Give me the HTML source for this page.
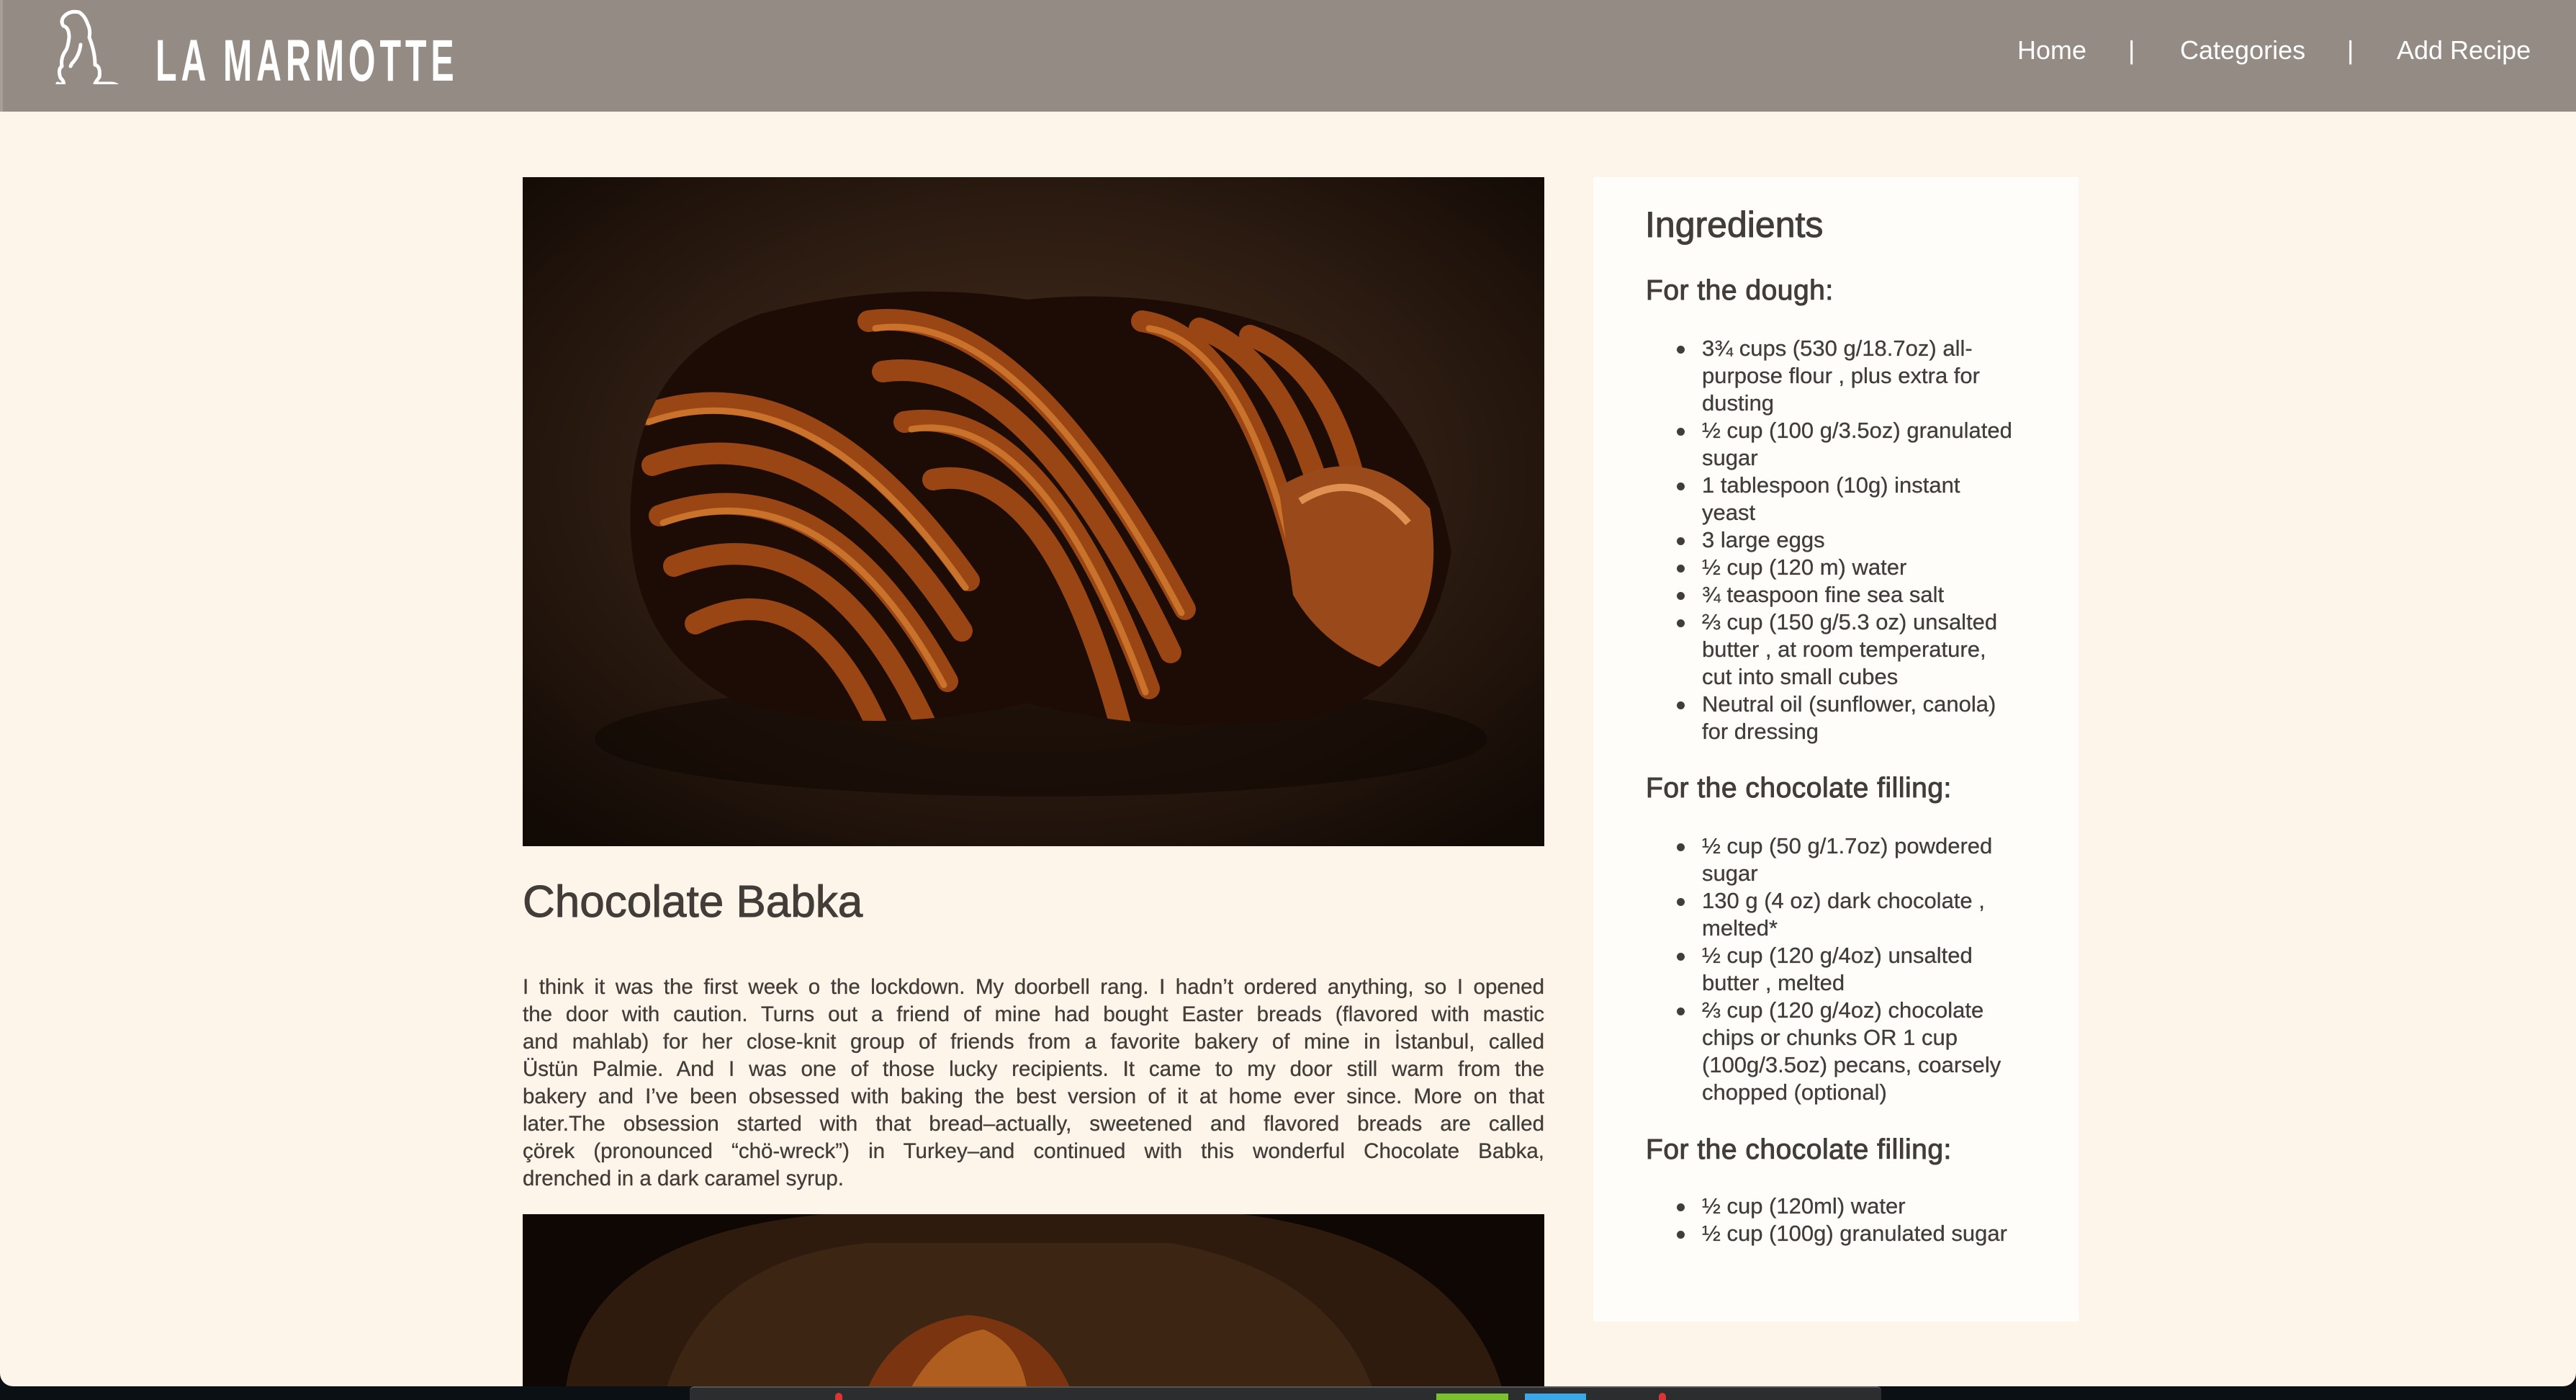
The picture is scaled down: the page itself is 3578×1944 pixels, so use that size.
<!DOCTYPE html>
<html><head><meta charset="utf-8"><style>
*{margin:0;padding:0;box-sizing:border-box}
html,body{width:3578px;height:1944px;overflow:hidden;background:#0b1015}
body{font-family:"Liberation Sans",sans-serif;color:#423d39;position:relative}
.page{position:absolute;left:0;top:0;width:3578px;height:1925px;background:#fdf4ea;border-radius:0 0 18px 18px;overflow:hidden}
.hdr{position:absolute;left:0;top:0;width:3578px;height:155px;background:#948b84;border-left:4px solid #a79f98}
.logo{position:absolute;left:212px;top:44px;font-weight:bold;font-size:82px;color:#fff;letter-spacing:10px;transform:scaleX(.59);transform-origin:left top;white-space:nowrap;line-height:82px}
.nav{position:absolute;top:48px;color:#fff;font-size:36px;line-height:44px;white-space:nowrap}
.abs{position:absolute;white-space:nowrap}
.p{position:absolute;left:726px;width:1419px;font-size:29.5px;line-height:38px;white-space:nowrap;text-align:justify;text-align-last:justify;-webkit-text-stroke:.3px #423d39}
.side{position:absolute;left:2213px;top:246px;width:674px;height:1589px;background:#fffdfa}
.li{position:absolute;left:2364px;font-size:31px;line-height:38px;white-space:nowrap;-webkit-text-stroke:.3px #423d39}
.b{position:absolute;left:2329px;width:11px;height:11px;border-radius:50%;background:#423d39}
h3{position:absolute;left:2286px;font-size:39px;font-weight:normal;letter-spacing:.5px;white-space:nowrap;-webkit-text-stroke:1px #423d39}
</style></head><body>
<div class="page">
<div class="hdr">
<svg style="position:absolute;left:72px;top:12px" width="105" height="105" viewBox="0 0 105 105" fill="none" stroke="#fff" stroke-width="5" stroke-linecap="round" stroke-linejoin="round">
<path d="M12 12 Q20 2 34 5 Q42 10 46 22 Q50 30 48 40 Q56 60 56 78 Q64 80 62 95 Q58 100 56 104 L80 104 Q90 106 90 112"/>
<path d="M12 12 Q8 18 12 24 Q20 26 20 40 Q18 56 14 60 Q8 70 10 80 Q4 84 8 96 Q14 102 12 106 L4 104"/>
<path d="M36 50 Q34 66 24 76 L22 80"/>
</svg>
<div class="logo">LA MARMOTTE</div>
<div class="nav" style="left:2798px">Home</div>
<div class="nav" style="left:2952px">|</div>
<div class="nav" style="left:3024px">Categories</div>
<div class="nav" style="left:3256px">|</div>
<div class="nav" style="left:3325px">Add Recipe</div>
</div>

<svg style="position:absolute;left:726px;top:246px" width="1419" height="929" viewBox="0 0 1419 929">
<defs><radialGradient id="bg1" cx="50%" cy="45%" r="70%"><stop offset="0" stop-color="#4a3020"/><stop offset=".6" stop-color="#2a1a10"/><stop offset="1" stop-color="#120a05"/></radialGradient>
<clipPath id="loaf"><path d="M150 450 Q160 250 330 190 Q520 140 700 170 Q900 150 1080 220 Q1250 300 1290 520 Q1260 710 1100 750 Q900 780 700 730 Q480 780 300 730 Q140 650 150 450Z"/></clipPath></defs>
<rect width="1419" height="929" fill="url(#bg1)"/>
<ellipse cx="720" cy="780" rx="620" ry="80" fill="#100804" opacity=".6"/>
<path d="M150 450 Q160 250 330 190 Q520 140 700 170 Q900 150 1080 220 Q1250 300 1290 520 Q1260 710 1100 750 Q900 780 700 730 Q480 780 300 730 Q140 650 150 450Z" fill="#1c0c05"/>
<g clip-path="url(#loaf)" fill="none" stroke-linecap="round">
<g stroke="#9a4514" stroke-width="30">
<path d="M170 330 Q400 250 620 560"/><path d="M180 400 Q410 320 610 630"/><path d="M190 470 Q420 390 590 700"/><path d="M210 540 Q420 460 560 760"/><path d="M240 620 Q400 540 500 780"/>
<path d="M480 200 Q690 170 920 600"/><path d="M500 270 Q700 240 900 660"/><path d="M530 340 Q720 310 870 710"/><path d="M570 420 Q730 390 830 760"/>
<path d="M860 200 Q1000 220 1080 540"/><path d="M940 210 Q1060 250 1120 480"/><path d="M1010 220 Q1120 260 1160 440"/>
</g>
<g stroke="#d27a30" stroke-width="9" opacity=".85">
<path d="M175 340 Q400 262 615 570"/><path d="M195 480 Q420 400 585 705"/><path d="M490 210 Q690 180 915 605"/><path d="M540 350 Q720 320 865 715"/><path d="M870 210 Q1000 230 1075 545"/>
</g>
</g>
<path d="M1050 430 Q1170 360 1260 460 Q1285 610 1190 680 Q1110 650 1070 580Z" fill="#9a4a1a"/>
<path d="M1080 450 Q1160 400 1230 480" stroke="#e09050" stroke-width="10" fill="none"/>
</svg>

<div class="abs" style="left:726px;top:1216px;font-size:62px;line-height:74px;-webkit-text-stroke:1px #423d39">Chocolate Babka</div>

<div class="p" style="top:1352px">I think it was the first week o the lockdown. My doorbell rang. I hadn’t ordered anything, so I opened</div>
<div class="p" style="top:1390px">the door with caution. Turns out a friend of mine had bought Easter breads (flavored with mastic</div>
<div class="p" style="top:1428px">and mahlab) for her close-knit group of friends from a favorite bakery of mine in İstanbul, called</div>
<div class="p" style="top:1466px">Üstün Palmie. And I was one of those lucky recipients. It came to my door still warm from the</div>
<div class="p" style="top:1504px">bakery and I’ve been obsessed with baking the best version of it at home ever since. More on that</div>
<div class="p" style="top:1542px">later.The obsession started with that bread–actually, sweetened and flavored breads are called</div>
<div class="p" style="top:1580px">çörek (pronounced “chö-wreck”) in Turkey–and continued with this wonderful Chocolate Babka,</div>
<div class="p" style="top:1618px;text-align-last:left">drenched in a dark caramel syrup.</div>

<svg style="position:absolute;left:726px;top:1686px" width="1419" height="240" viewBox="0 0 1419 240">
<rect width="1419" height="240" fill="#0e0703"/>
<path d="M60 240 Q90 30 420 0 L1000 0 Q1300 40 1360 240Z" fill="#2e1b0e"/>
<path d="M200 240 Q260 60 480 40 L900 40 Q1120 80 1180 240Z" fill="#3d2514"/>
<path d="M480 240 Q520 150 620 140 Q720 150 760 240Z" fill="#7a3410"/>
<path d="M540 240 Q580 170 640 160 Q690 180 700 240Z" fill="#b05e20"/>
</svg>

<div class="side"></div>
<div class="abs" style="left:2285px;top:282px;font-size:50px;line-height:60px;-webkit-text-stroke:1px #423d39">Ingredients</div>
<h3 style="top:380px;line-height:48px">For the dough:</h3>
<div class="b" style="top:480px"></div><div class="li" style="top:465px">3¾ cups (530 g/18.7oz) all-</div>
<div class="li" style="top:503px">purpose flour , plus extra for</div>
<div class="li" style="top:541px">dusting</div>
<div class="b" style="top:594px"></div><div class="li" style="top:579px">½ cup (100 g/3.5oz) granulated</div>
<div class="li" style="top:617px">sugar</div>
<div class="b" style="top:670px"></div><div class="li" style="top:655px">1 tablespoon (10g) instant</div>
<div class="li" style="top:693px">yeast</div>
<div class="b" style="top:746px"></div><div class="li" style="top:731px">3 large eggs</div>
<div class="b" style="top:784px"></div><div class="li" style="top:769px">½ cup (120 m) water</div>
<div class="b" style="top:822px"></div><div class="li" style="top:807px">¾ teaspoon fine sea salt</div>
<div class="b" style="top:860px"></div><div class="li" style="top:845px">⅔ cup (150 g/5.3 oz) unsalted</div>
<div class="li" style="top:883px">butter , at room temperature,</div>
<div class="li" style="top:921px">cut into small cubes</div>
<div class="b" style="top:974px"></div><div class="li" style="top:959px">Neutral oil (sunflower, canola)</div>
<div class="li" style="top:997px">for dressing</div>

<h3 style="top:1071px;line-height:48px">For the chocolate filling:</h3>
<div class="b" style="top:1171px"></div><div class="li" style="top:1156px">½ cup (50 g/1.7oz) powdered</div>
<div class="li" style="top:1194px">sugar</div>
<div class="b" style="top:1247px"></div><div class="li" style="top:1232px">130 g (4 oz) dark chocolate ,</div>
<div class="li" style="top:1270px">melted*</div>
<div class="b" style="top:1323px"></div><div class="li" style="top:1308px">½ cup (120 g/4oz) unsalted</div>
<div class="li" style="top:1346px">butter , melted</div>
<div class="b" style="top:1399px"></div><div class="li" style="top:1384px">⅔ cup (120 g/4oz) chocolate</div>
<div class="li" style="top:1422px">chips or chunks OR 1 cup</div>
<div class="li" style="top:1460px">(100g/3.5oz) pecans, coarsely</div>
<div class="li" style="top:1498px">chopped (optional)</div>

<h3 style="top:1573px;line-height:48px">For the chocolate filling:</h3>
<div class="b" style="top:1671px"></div><div class="li" style="top:1656px">½ cup (120ml) water</div>
<div class="b" style="top:1709px"></div><div class="li" style="top:1694px">½ cup (100g) granulated sugar</div>
</div>
<div style="position:absolute;left:958px;top:1925px;width:1655px;height:30px;background:#2b2d2f;border-radius:6px 6px 0 0;border-top:2px solid #555"></div>
<div style="position:absolute;left:1160px;top:1934px;width:10px;height:10px;background:#d33;border-radius:5px 5px 0 0"></div>
<div style="position:absolute;left:1995px;top:1935px;width:100px;height:9px;background:#7ac12e"></div>
<div style="position:absolute;left:2118px;top:1935px;width:85px;height:9px;background:#38a8e8"></div>
<div style="position:absolute;left:2304px;top:1934px;width:10px;height:10px;background:#d33;border-radius:5px 5px 0 0"></div>
</body></html>
